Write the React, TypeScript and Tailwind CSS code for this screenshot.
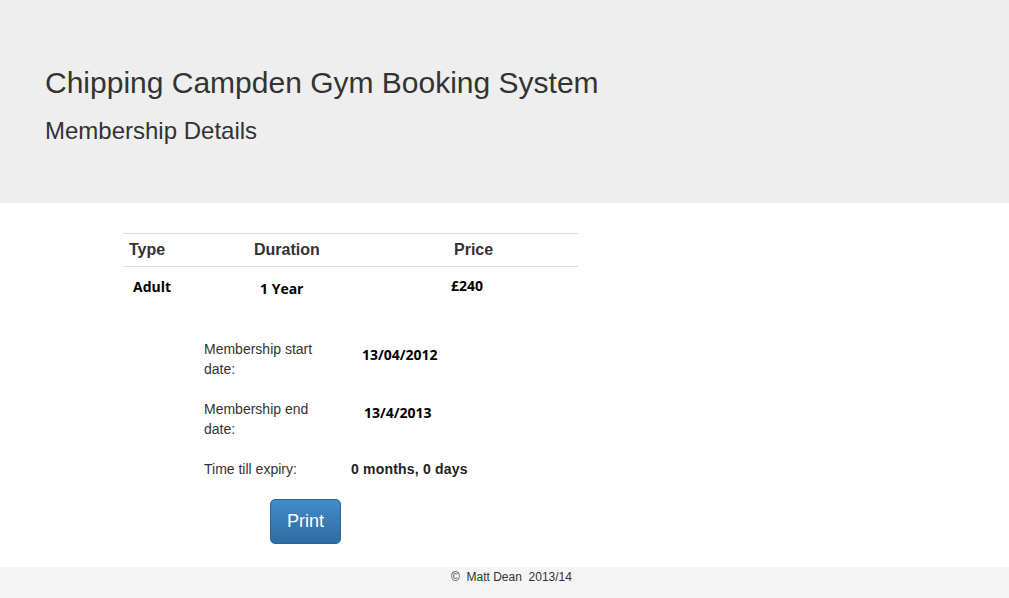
export default function App() {
  const details: { label: string; value: string; valuePad: string; valueTop: string; valueFont: string }[] = [
    { label: "Membership start date:", value: "13/04/2012", valuePad: "pl-[38px]", valueTop: "pt-[6px]", valueFont: "font-['Open_Sans',sans-serif] text-[14px] text-black" },
    { label: "Membership end date:", value: "13/4/2013", valuePad: "pl-[40px]", valueTop: "pt-[4px]", valueFont: "font-['Open_Sans',sans-serif] text-[14px] text-black" },
    { label: "Time till expiry:", value: "0 months, 0 days", valuePad: "pl-[27px]", valueTop: "pt-0", valueFont: "font-['Liberation_Sans',Arial,sans-serif] text-[14px] tracking-[0.2px] text-[#222]" },
  ];

  return (
    <div className="min-h-[598px] flex flex-col bg-white font-['Liberation_Sans',Arial,sans-serif] text-[#333]">
      {/* Jumbotron */}
      <div className="h-[203px] bg-[#eeeeee] pl-[45px] pt-[64px]">
        <h1 className="text-[30px] leading-[38px]">Chipping Campden Gym Booking System</h1>
        <h3 className="text-[24px] leading-[30px] mt-[14px]">Membership Details</h3>
      </div>

      {/* Membership table */}
      <div className="ml-[123px] mt-[30px] w-[455px]">
        <div className="flex h-[34px] items-center border-t border-b border-[#dddddd] text-[16px] font-bold">
          <div className="w-[125px] pl-[6px]">Type</div>
          <div className="w-[200px] pl-[6px]">Duration</div>
          <div className="pl-[6px]">Price</div>
        </div>
        <div className="flex pt-[8px] font-['Open_Sans',sans-serif] text-[14px] font-bold text-black">
          <div className="w-[125px] pl-[10px] pt-[1px]">Adult</div>
          <div className="w-[200px] pl-[12px] pt-[3px]">1 Year</div>
          <div className="pl-[3px]">£240</div>
        </div>
      </div>

      {/* Dates */}
      <div className="ml-[204px] mt-[40px] flex flex-col gap-[20px] text-[14px] leading-[20px]">
        {details.map((d, i) => (
          <div key={i} className="flex">
            <div className="w-[120px]">{d.label}</div>
            <div className={`${d.valuePad} ${d.valueTop} ${d.valueFont} font-bold`}>{d.value}</div>
          </div>
        ))}
      </div>

      <div className="ml-[270px] mt-[20px]">
        <button className="w-[71px] h-[45px] rounded-[5px] border border-[#2b669a] bg-gradient-to-b from-[#428bca] to-[#2d6ca2] text-white text-[18px]">
          Print
        </button>
      </div>

      <div className="flex-1" />

      {/* Footer */}
      <div className="h-[31px] bg-[#f5f5f5] pl-[451px] pt-[2px] text-[12px] leading-[16px]">
        ©&nbsp; Matt Dean&nbsp; 2013/14
      </div>
    </div>
  );
}
